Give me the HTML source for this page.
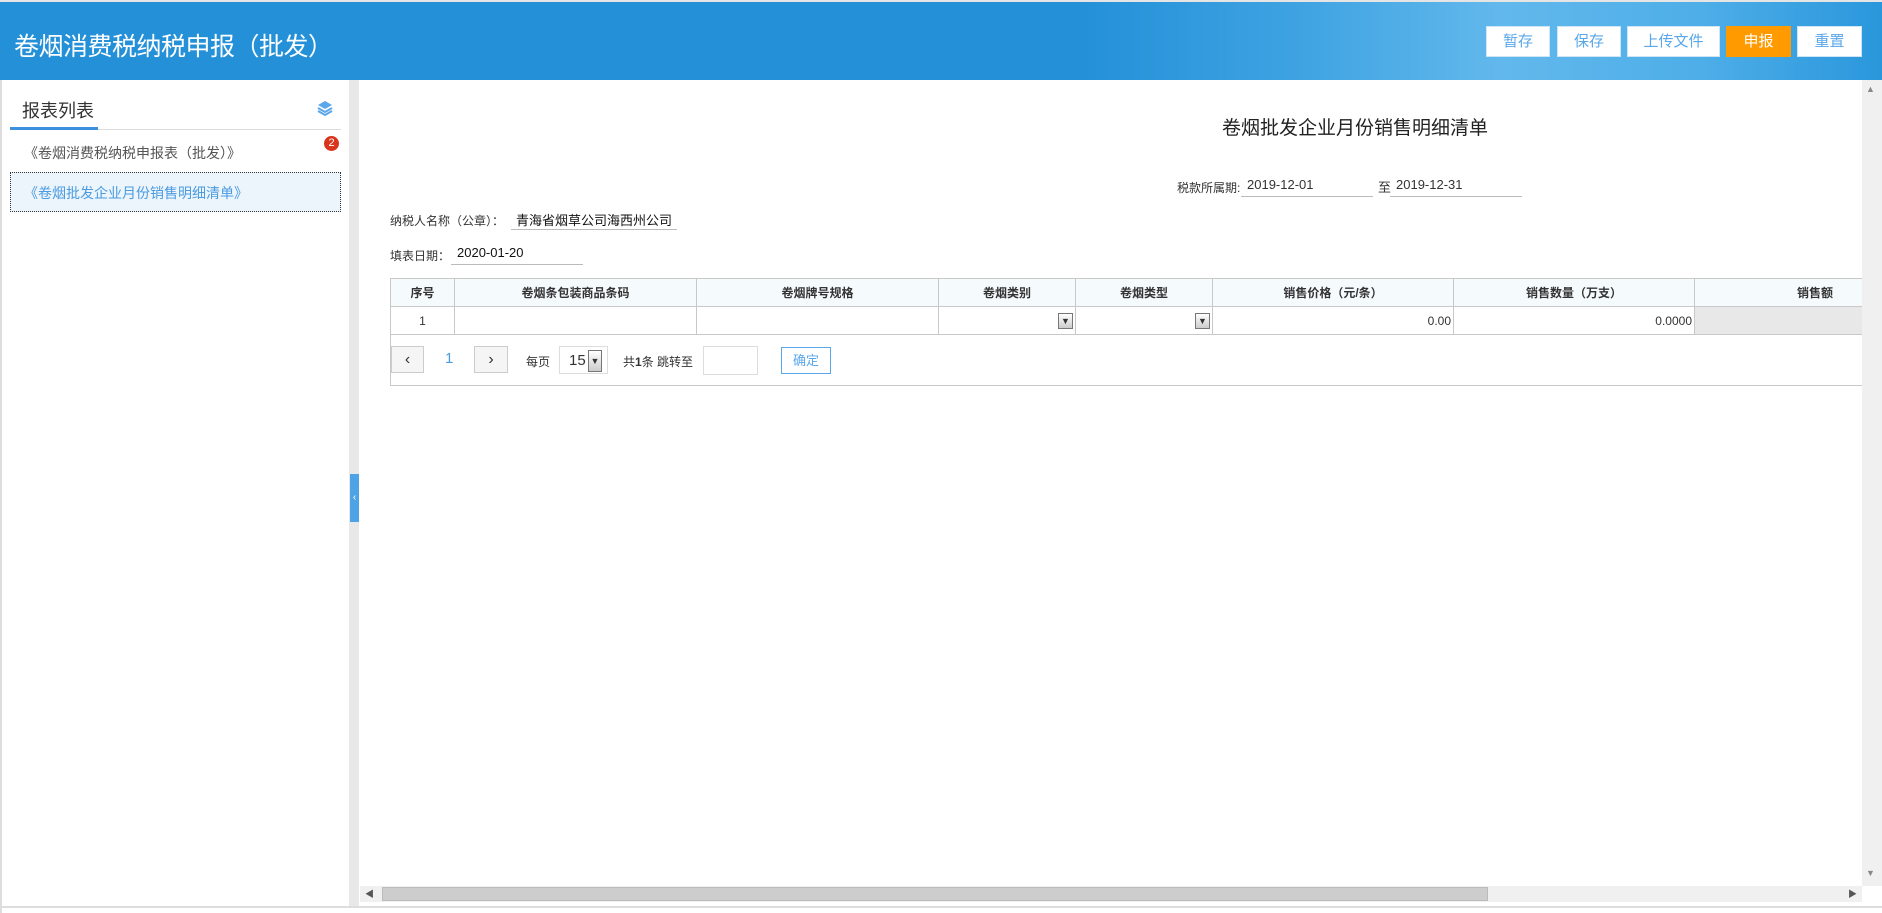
<!DOCTYPE html>
<html><head><meta charset="utf-8"><style>
*{margin:0;padding:0;box-sizing:border-box}
body{width:1882px;height:913px;overflow:hidden;background:#fff;font-family:"Liberation Sans","Noto Sans CJK SC",sans-serif;position:relative;color:#333}
.a{position:absolute}
#hdr{left:0;top:0;width:1882px;height:80px;background:linear-gradient(90deg,#2390d8 0,#2390d8 1080px,#3fa3e2 1300px,#62b8ec 1500px,#4eaee8 1700px,#2a97dc 1882px);border-top:2px solid #e5e5e5}
#hdr h1{position:absolute;left:14px;top:25px;font-size:25px;font-weight:normal;color:#fff;letter-spacing:-0.5px}
.btn{position:absolute;top:24px;height:31px;background:#fff;border:1px solid #cfe4f5;color:#5aa7ea;font-size:15px;text-align:center;line-height:29px}
.t13{font-size:13px;color:#333}
table{border-collapse:collapse;table-layout:fixed}
td{border:1px solid #c8c8c8;font-size:12px;height:28px;text-align:center}
th{border:1px solid #c8c8c8;font-size:12px;height:28px;font-weight:bold;background:#f5fafd;color:#333}
.dd{display:inline-block;width:15px;height:16px;border:1px solid #777;background:linear-gradient(#fff,#ccc);position:absolute;right:2px;top:6px;font-size:9px;line-height:14px;text-align:center}
</style></head><body>
<div id="hdr" class="a"><h1>卷烟消费税纳税申报（批发）</h1>
<div class="btn" style="left:1486px;width:64px">暂存</div>
<div class="btn" style="left:1557px;width:64px">保存</div>
<div class="btn" style="left:1627px;width:93px">上传文件</div>
<div class="btn" style="left:1726px;width:65px;background:#ff9a00;border-color:#ff9a00;color:#fff">申报</div>
<div class="btn" style="left:1797px;width:65px">重置</div>
</div>
<div class="a" style="left:0;top:80px;width:2px;height:833px;background:#ddd"></div>
<div class="a" style="left:22px;top:97px;font-size:18px;color:#333">报表列表</div>
<svg class="a" style="left:316px;top:99px" width="18" height="18" viewBox="0 0 18 18"><path d="M9 2 L16 6 L9 10 L2 6Z" fill="#5aa7ea"/><path d="M2 9 L9 13 L16 9" stroke="#5aa7ea" stroke-width="2" fill="none"/><path d="M2 12 L9 16 L16 12" stroke="#5aa7ea" stroke-width="2" fill="none"/></svg>
<div class="a" style="left:10px;top:129px;width:331px;height:1px;background:#ddd"></div>
<div class="a" style="left:10px;top:127px;width:88px;height:3px;background:#3b8fdc"></div>
<div class="a" style="left:24px;top:143px;font-size:14px;color:#555">《卷烟消费税纳税申报表（批发）》</div>
<div class="a" style="left:324px;top:136px;width:15px;height:15px;border-radius:50%;background:#d9341c;color:#fff;font-size:11px;text-align:center;line-height:15px">2</div>
<div class="a" style="left:10px;top:172px;width:331px;height:40px;background:#ecf4fc;border:1px dotted #333"></div>
<div class="a" style="left:24px;top:183px;font-size:14px;color:#4a9be0">《卷烟批发企业月份销售明细清单》</div>
<div class="a" style="left:349px;top:80px;width:10px;height:826px;background:#e8e8e8"></div>
<div class="a" style="left:350px;top:474px;width:9px;height:48px;background:#4ea3e4;color:#fff;font-size:10px;line-height:48px;text-align:center">‹</div>
<div class="a" style="left:0;top:906px;width:1882px;height:2px;background:#ddd"></div>
<div class="a" style="left:1862px;top:80px;width:20px;height:806px;background:#f0f0f0"></div>
<div class="a" style="left:1866px;top:84px;font-size:9px;color:#888">▲</div>
<div class="a" style="left:1866px;top:868px;font-size:9px;color:#888">▼</div>
<div class="a" style="left:360px;top:886px;width:1502px;height:16px;background:#f0f0f0"></div>
<div class="a" style="left:382px;top:887px;width:1106px;height:14px;background:#cdcdcd;border:1px solid #bbb"></div>
<div class="a" style="left:365px;top:887px;font-size:9px;color:#555">◀</div>
<div class="a" style="left:1848px;top:887px;font-size:9px;color:#555">▶</div>
<div class="a" style="left:1222px;top:113px;font-size:19px;color:#222">卷烟批发企业月份销售明细清单</div>
<div class="a t13" style="left:1177px;top:179px;font-size:12px">税款所属期:</div>
<div class="a t13" style="left:1247px;top:177px">2019-12-01</div>
<div class="a" style="left:1241px;top:196px;width:132px;height:1px;background:#bbb"></div>
<div class="a t13" style="left:1378px;top:177px">至</div>
<div class="a t13" style="left:1396px;top:177px">2019-12-31</div>
<div class="a" style="left:1390px;top:196px;width:132px;height:1px;background:#bbb"></div>
<div class="a t13" style="left:390px;top:212px;font-size:12px">纳税人名称（公章）：</div>
<div class="a t13" style="left:516px;top:210px;color:#111">青海省烟草公司海西州公司</div>
<div class="a" style="left:511px;top:229px;width:166px;height:1px;background:#bbb"></div>
<div class="a t13" style="left:390px;top:247px;font-size:12px">填表日期：</div>
<div class="a t13" style="left:457px;top:245px;color:#111">2020-01-20</div>
<div class="a" style="left:451px;top:264px;width:132px;height:1px;background:#bbb"></div>
<div class="a" style="left:390px;top:278px;width:1472px;height:108px;overflow:hidden;border-bottom:1px solid #c8c8c8;border-left:1px solid #c8c8c8">
<table style="width:1545px;margin-left:-1px">
<colgroup><col style="width:64px"><col style="width:242px"><col style="width:242px"><col style="width:137px"><col style="width:137px"><col style="width:241px"><col style="width:241px"><col style="width:241px"></colgroup>
<tr><th>序号</th><th>卷烟条包装商品条码</th><th>卷烟牌号规格</th><th>卷烟类别</th><th>卷烟类型</th><th>销售价格（元/条）</th><th>销售数量（万支）</th><th>销售额</th></tr>
<tr><td>1</td><td></td><td></td><td style="position:relative"><span class="dd">▼</span></td><td style="position:relative"><span class="dd">▼</span></td><td style="text-align:right;padding-right:2px">0.00</td><td style="text-align:right;padding-right:2px">0.0000</td><td style="background:#e8e8e8"></td></tr>
</table>
</div>
<div class="a" style="left:391px;top:346px;width:33px;height:27px;border:1px solid #ccc;background:#f5f5f5;text-align:center;line-height:25px;font-size:16px">‹</div>
<div class="a" style="left:445px;top:350px;font-size:15px;color:#4a9be0">1</div>
<div class="a" style="left:474px;top:346px;width:34px;height:27px;border:1px solid #ccc;background:#f5f5f5;text-align:center;line-height:25px;font-size:16px">›</div>
<div class="a t13" style="left:526px;top:353px;font-size:12px">每页</div>
<div class="a" style="left:559px;top:346px;width:49px;height:28px;border:1px solid #ddd;font-size:15px;padding:5px 0 0 9px">15<span style="position:absolute;left:28px;top:3px;width:14px;height:22px;border:1px solid #777;background:linear-gradient(#fff,#ccc);font-size:9px;line-height:20px;text-align:center">▼</span></div>
<div class="a t13" style="left:623px;top:353px;font-size:12px">共<b>1</b>条 跳转至</div>
<div class="a" style="left:703px;top:346px;width:55px;height:29px;border:1px solid #ddd"></div>
<div class="a" style="left:781px;top:347px;width:50px;height:27px;border:1px solid #5aa7ea;color:#5aa7ea;font-size:13px;text-align:center;line-height:25px">确定</div>
</body></html>
